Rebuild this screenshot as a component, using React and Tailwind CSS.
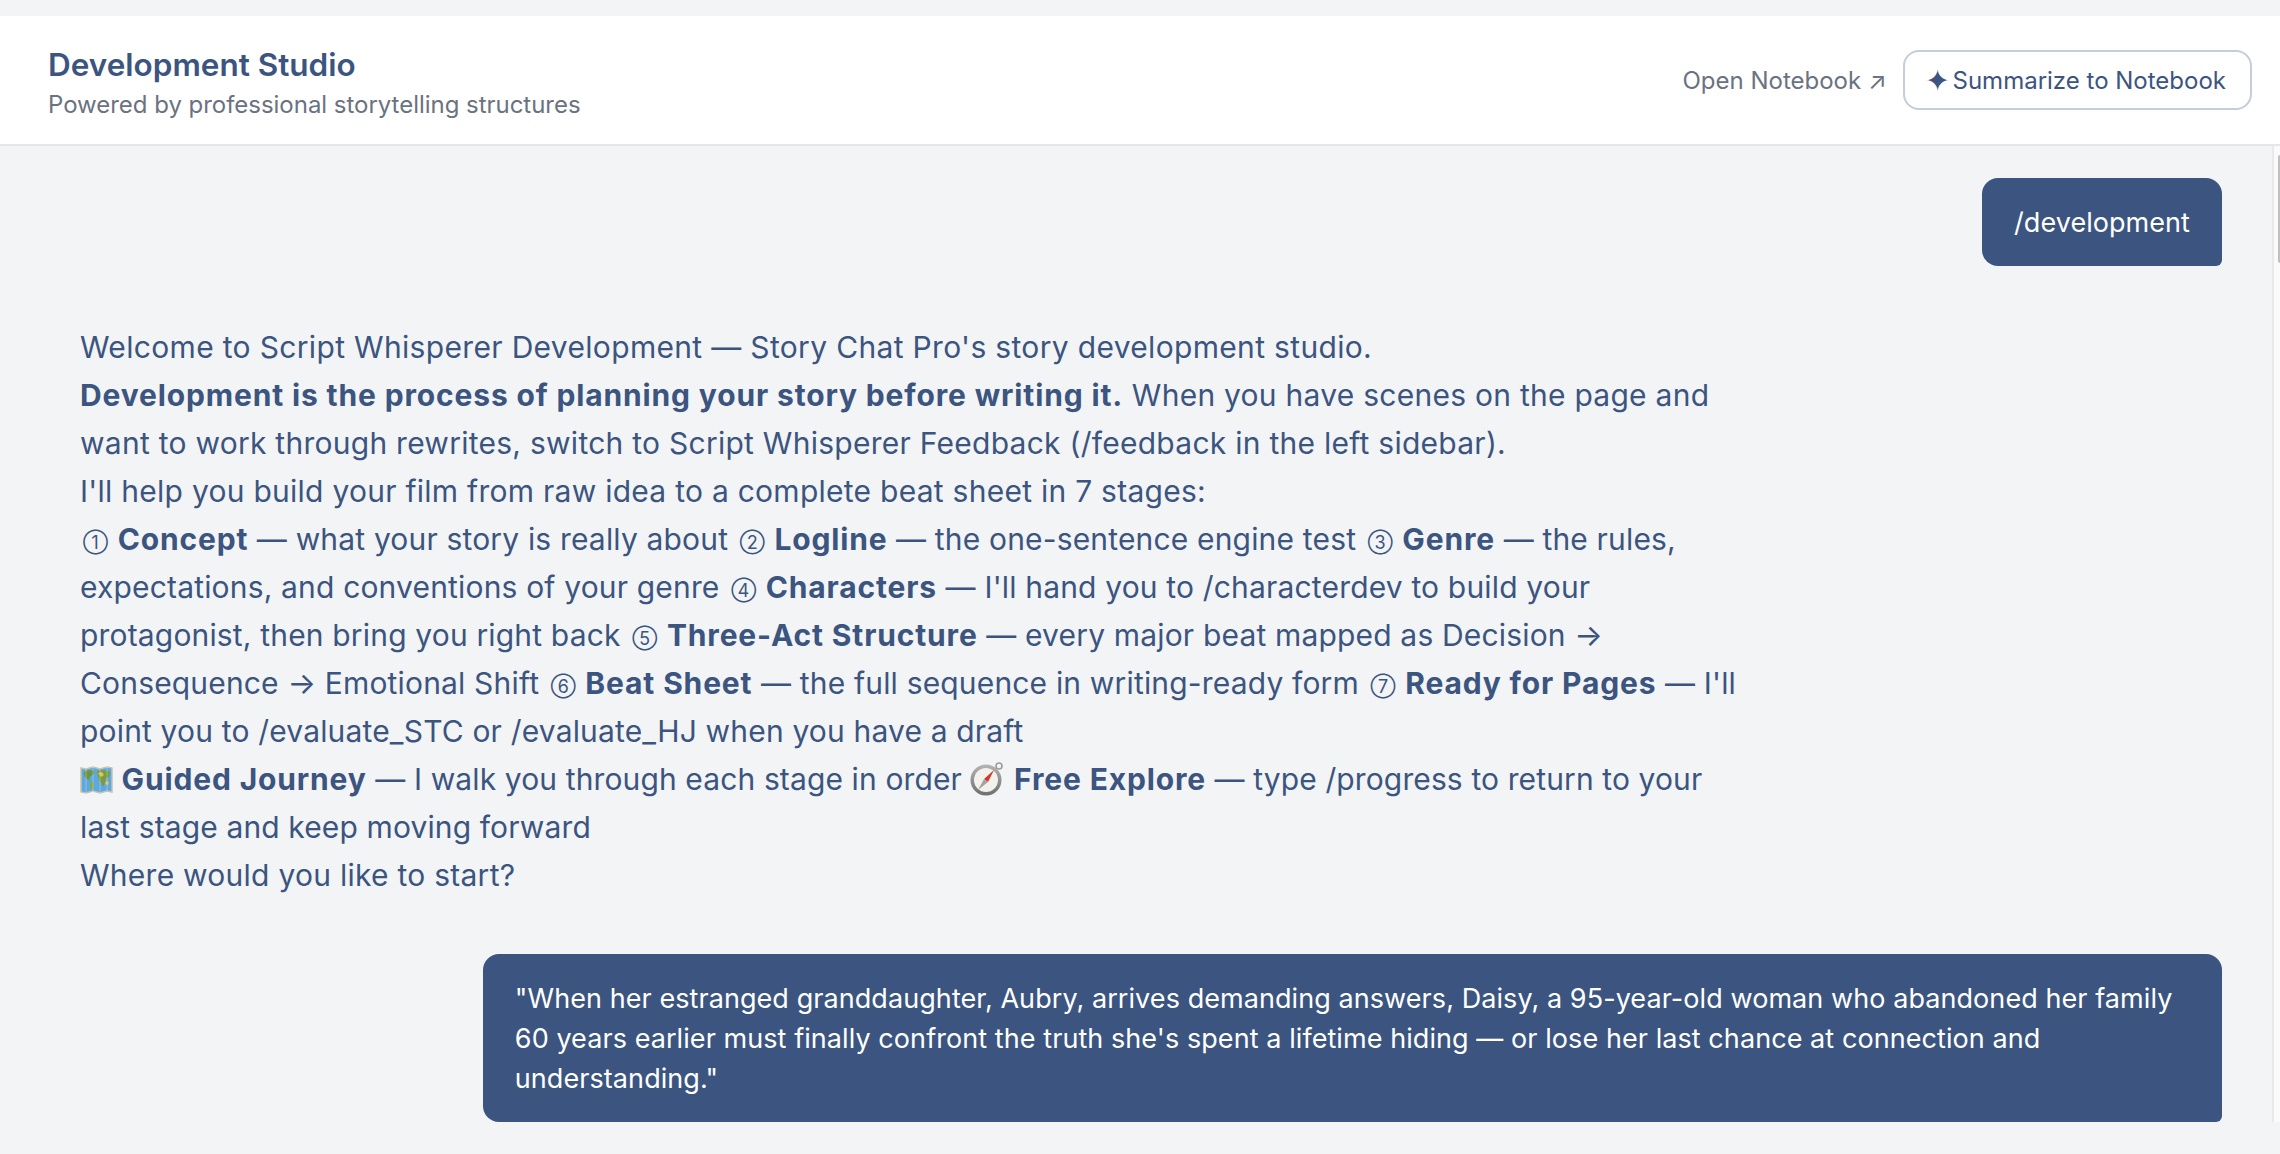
import React from 'react';

const MapEmoji = () => (
  <svg className="inline-block align-[-4px] w-[33px] h-[28px]" viewBox="0 0 33 28">
    <path d="M1 2l5 1 7-2 7 2 7-2 5 1v24l-5-1-7 2-7-2-7 2-5-1z" fill="#5fa8dc" stroke="#c8c2b0" strokeWidth="1.5" />
    <path d="M4 6c3-2 7-2 10-1 1 2-1 4-3 5-2 1-2 3-1 4l-3-1C5 11 3 9 4 6z" fill="#6f9440" />
    <path d="M10 15l3 1 1 3-2 5-2-3z" fill="#8aa84a" />
    <path d="M17 5c3-1 9-1 13 1l-1 5-3 1-1 4-2 5-2-4-2-3-1-4z" fill="#7a9c3f" />
    <path d="M18 7l4-1 2 3-3 2zM26 15l3 1-1 3-3-1z" fill="#e0c04f" />
    <path d="M6 2v24M13 1v25M20 3v24M27 1v24" stroke="#ffffff" strokeOpacity="0.3" />
  </svg>
);

const CompassEmoji = () => (
  <svg className="inline-block align-[-6px] w-[35px] h-[35px]" viewBox="0 0 35 35">
    <defs>
      <linearGradient id="bezel" x1="0" y1="0" x2="0" y2="1">
        <stop offset="0" stopColor="#b5b5b5" />
        <stop offset="1" stopColor="#6f6f6f" />
      </linearGradient>
    </defs>
    <circle cx="29" cy="5" r="3" fill="none" stroke="#9c9c9c" strokeWidth="1.6" />
    <circle cx="16" cy="19" r="15.5" fill="url(#bezel)" />
    <circle cx="16" cy="19" r="12" fill="#f3f1ec" />
    <path d="M24 9l-6 12-4-3z" fill="#d8352a" />
    <path d="M8 29l6-11 4 3z" fill="#a3a3a3" />
  </svg>
);

const Num = ({ children }) => (
  <span className="mr-[1px] ml-[3px] inline-block align-[1px] text-[18px] leading-none tracking-normal">{children}</span>
);

const B = ({ children }) => (
  <strong className="font-bold tracking-[0.85px]">{children}</strong>
);

const App = () => {
  return (
    <div className="h-[1154px] overflow-hidden bg-[#f3f4f6] pt-4 font-['Inter',sans-serif] text-[#3b5580]">
      <header className="flex h-[130px] items-center justify-between border-b-2 border-[#e5e7eb] bg-white pl-12 pr-7">
        <div className="pt-[6px]">
          <h1 className="text-[31.5px] leading-[40px] font-semibold">Development Studio</h1>
          <p className="mt-1 text-[24px] leading-[32px] tracking-[-0.03px] text-[#6b7280]">Powered by professional storytelling structures</p>
        </div>
        <div className="flex items-center gap-4">
          <span className="pt-[2px] text-[24px] text-[#6b7280]">Open Notebook ↗</span>
          <button className="flex h-[60px] items-center rounded-2xl border-2 border-[#c5cdda] bg-white pr-6 pl-[20px] text-[24px]">
            <span className="w-[28px] text-left text-[30px] leading-none">✦</span>
            <span className="pt-[2px]">Summarize to Notebook</span>
          </button>
        </div>
      </header>

      <div className="relative flex flex-col pt-8 pr-[58px] pl-12">
        <div className="absolute top-0 right-0 bottom-0 w-[8px] border-l-2 border-[#e8e9ec] bg-[#fafafa]">
          <div className="mt-[9px] ml-1 h-[108px] rounded-l-md bg-[#c0c0c0]"></div>
        </div>

        <div className="self-end rounded-2xl rounded-br-md bg-[#3b5580] px-8 pt-[25px] pb-[23px] text-[27px] leading-[40px] tracking-[0.05px] text-white">/development</div>

        <div className="mt-[33px] max-w-[80%] px-8 py-6 text-[30px] leading-[48px] tracking-[0.26px]">
          <p className="tracking-[0.33px]">Welcome to Script Whisperer Development — Story Chat Pro's story development studio.</p>
          <p><B>Development is the process of planning your story before writing it.</B> When you have scenes on the page and want to work through rewrites, switch to Script Whisperer Feedback (/feedback in the left sidebar).</p>
          <p>I'll help you build your film from raw idea to a complete beat sheet in 7 stages:</p>
          <p className="tracking-[0.17px]"><Num>①</Num> <B>Concept</B> — what your story is really about <Num>②</Num> <B>Logline</B> — the one-sentence engine test <Num>③</Num> <B>Genre</B> — the rules, expectations, and conventions of your genre <Num>④</Num> <B>Characters</B> — I'll hand you to /characterdev to build your protagonist, then bring you right back <Num>⑤</Num> <B>Three-Act Structure</B> — every major beat mapped as Decision → Consequence → Emotional Shift <Num>⑥</Num> <B>Beat Sheet</B> — the full sequence in writing-ready form <Num>⑦</Num> <B>Ready for Pages</B> — I'll point you to /evaluate_STC or /evaluate_HJ when you have a draft</p>
          <p className="tracking-[0.12px]"><MapEmoji /> <B>Guided Journey</B> — I walk you through each stage in order <CompassEmoji /> <B>Free Explore</B> — type /progress to return to your last stage and keep moving forward</p>
          <p>Where would you like to start?</p>
        </div>

        <div className="mt-[31px] max-w-[80%] self-end rounded-2xl rounded-br-md bg-[#3b5580] px-8 pt-[25px] pb-[23px] text-[27px] leading-[40px] tracking-[0.07px] text-white">
          "When her estranged granddaughter, Aubry, arrives demanding answers, Daisy, a 95-year-old woman who abandoned her family 60 years earlier must finally confront the truth she's spent a lifetime hiding — or lose her last chance at connection and understanding."
        </div>
      </div>
    </div>
  );
};

export default App;
